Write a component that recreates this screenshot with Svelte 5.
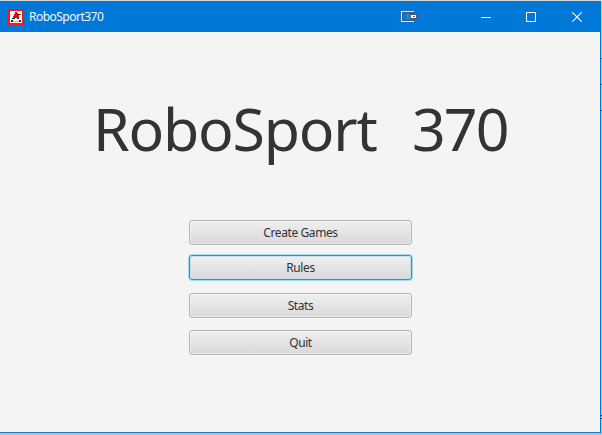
<script>
  const actions = ['Create Games', 'Rules', 'Stats', 'Quit'];
  const focused = 'Rules';
</script>

<div class="desktop">
  <main class="window">
    <header>
      <svg class="logo" width="16" height="16" shape-rendering="crispEdges">
        <rect width="16" height="16" fill="#ff1414" />
        <rect x="2" y="2" width="12" height="12" fill="#fff" />
        <path d="M7 3h2v1h1v2h1v3H5V7h1V5h1z" fill="#e80808" />
        <path d="M10 5h3v1h-3zM4 9h3v1H4zM9 9h2v1H9zM3 11h2v2H3zM11 11h2v2h-2z" fill="#333" />
        <path d="M5 12h6v1H5z" fill="#aaa" />
      </svg>
      <span class="caption">RoboSport370</span>
      <svg class="tool" width="17" height="12" shape-rendering="crispEdges">
        <rect x=".5" y=".5" width="12" height="10" fill="#0078d7" stroke="#e8e8e8" />
        <path d="M1.5 1.5h11v8h-11z" fill="none" stroke="#51566b" />
        <path d="M6.5 3v5M8.5 3v5" stroke="#6386b0" />
        <rect x="9" y="2" width="7" height="7" fill="#51566b" />
        <rect x="10" y="4" width="5" height="3" fill="#fff" />
        <rect x="12" y="5" width="2" height="1" fill="#51566b" />
      </svg>
      <svg class="min" width="10" height="10"><path d="M0 5.5h10" stroke="#fff" /></svg>
      <svg class="max" width="10" height="10"><path d="M.5.5h9v9h-9z" fill="none" stroke="#fff" /></svg>
      <svg class="close" width="10" height="10"><path d="M.3.3l9.4 9.4M9.7.3L.3 9.7" stroke="#fff" stroke-width="1.1" /></svg>
    </header>
    <section>
      <h1><span class="name">RoboSport</span><span class="number">370</span></h1>
      <nav>
        {#each actions as action}
          <button class:focused={action === focused}><span>{action}</span></button>
        {/each}
      </nav>
    </section>
  </main>
  <aside>
    <i></i><i></i><i></i><i class="low"></i><i class="last"></i>
  </aside>
</div>

<style>
  .desktop {
    box-sizing: border-box;
    width: 602px;
    height: 435px;
    padding-top: 1px;
    display: flex;
    overflow: hidden;
    background: linear-gradient(#d4d7da 0 1px, transparent 1px 433px, #b2b2b2 433px, #c6c6c6 435px), #b4cde4;
    font-family: "Noto Sans", "Open Sans", sans-serif;
  }
  .window {
    box-sizing: border-box;
    width: 601px;
    height: 432px;
    flex: none;
    border-right: 1px solid #0078d7;
    border-bottom: 1px solid #1880c9;
    background: #f4f4f4;
  }
  header {
    height: 31px;
    width: 601px;
    display: flex;
    align-items: center;
    background: #0078d7;
    color: #f4f8fc;
  }
  svg { flex: none; display: block; }
  .logo { margin-left: 8px; }
  .caption {
    width: 76px;
    margin-left: 5px;
    font-size: 12px;
    line-height: 16px;
    letter-spacing: -0.52px;
    white-space: nowrap;
  }
  .tool { margin-left: 296px; }
  .min { margin-left: 63px; }
  .max { margin-left: 35px; }
  .close { margin-left: 36px; }
  h1 {
    height: 80px;
    margin: 56px 0 0 93px;
    display: flex;
    color: #333;
    font-size: 59px;
    font-weight: 400;
    line-height: 80px;
    white-space: nowrap;
  }
  .name { width: 319px; letter-spacing: -1.2px; }
  .number { letter-spacing: -1.9px; }
  nav {
    width: 223px;
    margin: 52px 0 0 189px;
    display: flex;
    flex-direction: column;
  }
  button {
    box-sizing: border-box;
    height: 25px;
    margin: 0 0 12px;
    padding: 0;
    display: flex;
    align-items: center;
    justify-content: center;
    border: 1px solid #b5b5b5;
    border-radius: 3px;
    background: linear-gradient(#efefef, #d9d9d9);
    box-shadow: inset 0 0 0 1px #ffffff66, 0 1px #fafafa;
    color: #333;
    font: 12px/16px "Noto Sans", "Open Sans", sans-serif;
    letter-spacing: -0.4px;
  }
  button:first-child { margin-bottom: 10px; }
  button.focused {
    margin-bottom: 13px;
    border-color: #159bce;
    box-shadow: 0 0 0 1px #a4d9ee, inset 0 0 0 1px #c7e0e9;
  }
  aside { width: 1px; padding-top: 57px; }
  i { display: block; height: 1px; margin-bottom: 25px; background: #334c60; }
  .low { margin: 304px 0 2px; background: #111; }
  .last { background: #111; }
</style>
